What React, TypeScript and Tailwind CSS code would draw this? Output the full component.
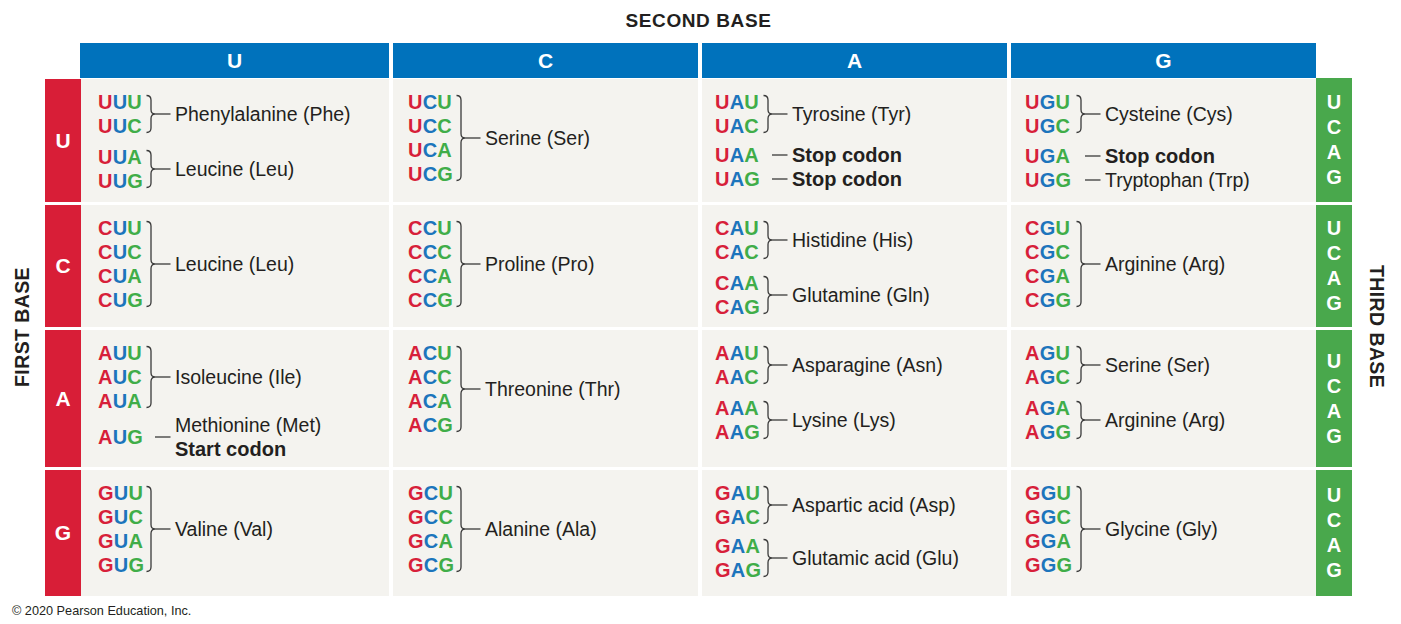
import React from "react";

type Group = {
  codons: string[];
  label: string[];
  bold?: boolean[];
  gap?: 0 | 5 | 6 | 7;
};

const gapClass: Record<number, string> = {
  0: "mt-0",
  5: "mt-[5px]",
  6: "mt-[6px]",
  7: "mt-[7px]",
};

const rows: { base: string; h: string; cells: Group[][] }[] = [
  {
    base: "U",
    h: "h-[123px]",
    cells: [
      [
        { codons: ["UUU", "UUC"], label: ["Phenylalanine (Phe)"] },
        { codons: ["UUA", "UUG"], label: ["Leucine (Leu)"], gap: 7 },
      ],
      [{ codons: ["UCU", "UCC", "UCA", "UCG"], label: ["Serine (Ser)"] }],
      [
        { codons: ["UAU", "UAC"], label: ["Tyrosine (Tyr)"] },
        { codons: ["UAA"], label: ["Stop codon"], bold: [true], gap: 5 },
        { codons: ["UAG"], label: ["Stop codon"], bold: [true], gap: 0 },
      ],
      [
        { codons: ["UGU", "UGC"], label: ["Cysteine (Cys)"] },
        { codons: ["UGA"], label: ["Stop codon"], bold: [true], gap: 6 },
        { codons: ["UGG"], label: ["Tryptophan (Trp)"], gap: 0 },
      ],
    ],
  },
  {
    base: "C",
    h: "h-[122px]",
    cells: [
      [{ codons: ["CUU", "CUC", "CUA", "CUG"], label: ["Leucine (Leu)"] }],
      [{ codons: ["CCU", "CCC", "CCA", "CCG"], label: ["Proline (Pro)"] }],
      [
        { codons: ["CAU", "CAC"], label: ["Histidine (His)"] },
        { codons: ["CAA", "CAG"], label: ["Glutamine (Gln)"], gap: 7 },
      ],
      [{ codons: ["CGU", "CGC", "CGA", "CGG"], label: ["Arginine (Arg)"] }],
    ],
  },
  {
    base: "A",
    h: "h-[137px]",
    cells: [
      [
        { codons: ["AUU", "AUC", "AUA"], label: ["Isoleucine (Ile)"] },
        {
          codons: ["AUG"],
          label: ["Methionine (Met)", "Start codon"],
          bold: [false, true],
          gap: 0,
        },
      ],
      [{ codons: ["ACU", "ACC", "ACA", "ACG"], label: ["Threonine (Thr)"] }],
      [
        { codons: ["AAU", "AAC"], label: ["Asparagine (Asn)"] },
        { codons: ["AAA", "AAG"], label: ["Lysine (Lys)"], gap: 7 },
      ],
      [
        { codons: ["AGU", "AGC"], label: ["Serine (Ser)"] },
        { codons: ["AGA", "AGG"], label: ["Arginine (Arg)"], gap: 7 },
      ],
    ],
  },
  {
    base: "G",
    h: "h-[126px]",
    cells: [
      [{ codons: ["GUU", "GUC", "GUA", "GUG"], label: ["Valine (Val)"] }],
      [{ codons: ["GCU", "GCC", "GCA", "GCG"], label: ["Alanine (Ala)"] }],
      [
        { codons: ["GAU", "GAC"], label: ["Aspartic acid (Asp)"] },
        { codons: ["GAA", "GAG"], label: ["Glutamic acid (Glu)"], gap: 5 },
      ],
      [{ codons: ["GGU", "GGC", "GGA", "GGG"], label: ["Glycine (Gly)"] }],
    ],
  },
];

const padCols = ["pl-[17px]", "pl-[15px]", "pl-[13px]", "pl-[14px]"];
const codonCols = ["w-[48px]", "w-[48px]", "w-[48px]", "w-[51px]"];

function Connector({ n }: { n: number }) {
  const H = n * 24;
  const m = H / 2;
  const y0 = 5.5;
  const y1 = H - 5.5;
  return (
    <svg width="26" height={H} viewBox={`0 0 26 ${H}`} className="shrink-0 block">
      {n > 1 && (
        <path
          d={`M0.5,${y0} C3.5,${y0} 5,${y0 + 1} 5,${y0 + 4.5} L5,${m - 4.5} C5,${m - 1.5} 6.5,${m} 9,${m} C6.5,${m} 5,${m + 1.5} 5,${m + 4.5} L5,${y1 - 4.5} C5,${y1 - 1} 3.5,${y1} 0.5,${y1}`}
          fill="none"
          stroke="#3a3a3a"
          strokeWidth="1.3"
        />
      )}
      <path d={`M9,${m} H24.5`} stroke="#3a3a3a" strokeWidth="1.3" />
    </svg>
  );
}

function Codon({ c }: { c: string }) {
  return (
    <div className="font-bold text-[20px] leading-[24px] whitespace-nowrap tracking-[0.2px]">
      <span className="text-[#d71f3a]">{c[0]}</span>
      <span className="text-[#1c75bc]">{c[1]}</span>
      <span className="text-[#40ad48]">{c[2]}</span>
    </div>
  );
}

function GroupView({ g, col }: { g: Group; col: number }) {
  return (
    <div className={`flex items-center ${gapClass[g.gap ?? 0]}`}>
      <div className={`flex flex-col shrink-0 ${codonCols[col]}`}>
        {g.codons.map((c) => (
          <Codon key={c} c={c} />
        ))}
      </div>
      <Connector n={g.codons.length} />
      <div className="flex flex-col ml-[3px] text-[#231f20]">
        {g.label.map((l, i) =>
          g.bold && g.bold[i] ? (
            <div key={i} className="font-bold text-[20px] leading-[24px] whitespace-nowrap">
              {l}
            </div>
          ) : (
            <div key={i} className="text-[19.5px] leading-[24px] whitespace-nowrap">
              {l}
            </div>
          )
        )}
      </div>
    </div>
  );
}

export default function App() {
  return (
    <div className="w-[1401px] h-[624px] bg-white font-['Liberation_Sans',Arial,sans-serif] text-[#231f20] overflow-hidden">
      <div className="h-[43px] pl-[81px] flex items-center">
        <div className="w-[1235px] text-center font-bold text-[19px] tracking-[0.6px] leading-none pb-[3px] text-[#231f20]">
          SECOND BASE
        </div>
      </div>
      <div className="flex">
        <div className="w-[45px] shrink-0 flex items-center justify-center pt-[14px]">
          <div className="[writing-mode:vertical-rl] rotate-180 font-bold text-[19.5px] tracking-[0.4px] whitespace-nowrap">
            FIRST BASE
          </div>
        </div>
        <div className="flex flex-col w-[1307px] shrink-0">
          <div className="flex h-[35px]">
            <div className="w-[35px] shrink-0" />
            <div className="grid grid-cols-[309px_305px_305px_305px] gap-x-[4px]">
              {["U", "C", "A", "G"].map((b) => (
                <div
                  key={b}
                  className="bg-[#0072bc] text-white font-bold text-[21px] flex items-center justify-center"
                >
                  {b}
                </div>
              ))}
            </div>
          </div>
          <div className="flex flex-col gap-y-[3px] mt-[1px]">
            {rows.map((r, ri) => (
              <div key={r.base} className={`flex ${r.h}`}>
                <div className="w-[36px] shrink-0 bg-[#d81e37] text-white font-bold text-[21px] flex items-center justify-center">
                  {r.base}
                </div>
                <div className="grid grid-cols-[308px_305px_305px_305px] gap-x-[4px]">
                  {r.cells.map((cell, ci) => (
                    <div
                      key={ci}
                      className={`bg-[#f4f3ef] pt-[11px] flex flex-col ${padCols[ci]}`}
                    >
                      {cell.map((g, gi) => (
                        <GroupView key={gi} g={g} col={ci} />
                      ))}
                    </div>
                  ))}
                </div>
                <div
                  className={`w-[36px] shrink-0 bg-[#49a84c] text-white font-bold text-[20px] leading-[25px] flex flex-col items-center justify-center ${
                    ri === 0 ? "-mt-[1px]" : ""
                  }`}
                >
                  <span>U</span>
                  <span>C</span>
                  <span>A</span>
                  <span>G</span>
                </div>
              </div>
            ))}
          </div>
        </div>
        <div className="flex-1 flex items-center justify-center pt-[14px]">
          <div className="[writing-mode:vertical-rl] font-bold text-[19.5px] tracking-[0.4px] whitespace-nowrap">
            THIRD BASE
          </div>
        </div>
      </div>
      <div className="pl-[12px] pt-[5px] text-[12.7px] leading-[20px] text-[#231f20]">
        © 2020 Pearson Education, Inc.
      </div>
    </div>
  );
}
